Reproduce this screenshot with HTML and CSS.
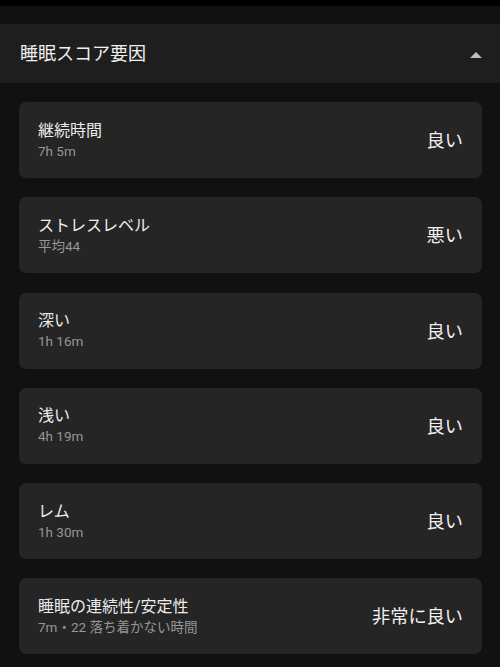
FILE: index.html
```html
<!DOCTYPE html>
<html lang="ja">
<head>
  <meta charset="UTF-8">
  <meta name="viewport" content="width=device-width, initial-scale=1.0">
  <title>睡眠スコア要因</title>
  <link rel="stylesheet" href="styles.css">
</head>
<body>
  <div class="status"></div>
  <div class="section">
    <div class="section-head">
      <h2>睡眠スコア要因</h2>
      <span class="caret"></span>
    </div>
    <ul class="factors">
      <li>
        <div class="info">
          <div class="name">継続時間</div>
          <div class="detail">7h 5m</div>
        </div>
        <div class="rating">良い</div>
      </li>
      <li>
        <div class="info">
          <div class="name">ストレスレベル</div>
          <div class="detail">平均44</div>
        </div>
        <div class="rating">悪い</div>
      </li>
      <li>
        <div class="info">
          <div class="name">深い</div>
          <div class="detail">1h 16m</div>
        </div>
        <div class="rating">良い</div>
      </li>
      <li>
        <div class="info">
          <div class="name">浅い</div>
          <div class="detail">4h 19m</div>
        </div>
        <div class="rating">良い</div>
      </li>
      <li>
        <div class="info">
          <div class="name">レム</div>
          <div class="detail">1h 30m</div>
        </div>
        <div class="rating">良い</div>
      </li>
      <li>
        <div class="info">
          <div class="name">睡眠の連続性/安定性</div>
          <div class="detail">7m・22 落ち着かない時間</div>
        </div>
        <div class="rating">非常に良い</div>
      </li>
    </ul>
  </div>
</body>
</html>
```

FILE: styles.css
```css
* {
  margin: 0;
  padding: 0;
  box-sizing: border-box;
}
body {
  background-color: #111111;
  color: #ececec;
  font-family: Roboto, "Noto Sans CJK JP", sans-serif;
  height: 667px;
  overflow: hidden;
}
.status {
  height: 6px;
  background-color: #000;
}
.section {
  margin-top: 18px;
}
.section-head {
  display: flex;
  align-items: center;
  justify-content: space-between;
  height: 59px;
  padding: 0 18px 0 20px;
  background-color: #1e1e1e;
}
.section-head h2 {
  font-size: 18px;
  font-weight: normal;
  line-height: 24px;
  color: #f0f0f0;
}
.caret {
  width: 0;
  height: 0;
  border-left: 6px solid transparent;
  border-right: 6px solid transparent;
  border-bottom: 6px solid #bdbdbd;
  margin-top: 2px;
}
.factors {
  list-style-type: none;
  display: flex;
  flex-direction: column;
  gap: 19.3px;
  padding: 19px 18px 0 19px;
}
.factors li {
  display: flex;
  align-items: center;
  justify-content: space-between;
  height: 76px;
  padding: 0 19px;
  background-color: #252525;
  border-radius: 7px;
}
.name {
  font-size: 16px;
  line-height: 22px;
  color: #ececec;
}
.detail {
  font-size: 13.5px;
  line-height: 19px;
  color: #969696;
}
.rating {
  font-size: 18.2px;
  line-height: 24px;
  color: #f0f0f0;
  margin-top: 2px;
}
```
